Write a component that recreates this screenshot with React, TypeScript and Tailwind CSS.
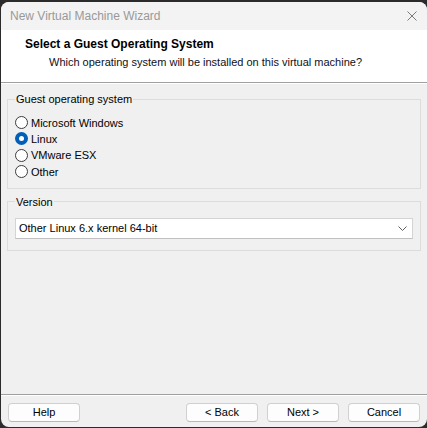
import React, { useState } from 'react';

const OS_OPTIONS = ['Microsoft Windows', 'Linux', 'VMware ESX', 'Other'];

const Radio: React.FC<{ label: string; checked: boolean; onSelect: () => void }> = ({ label, checked, onSelect }) => (
  <label className="flex h-[16.33px] cursor-default items-center" onClick={onSelect}>
    {checked ? (
      <span className="flex h-[13px] w-[13px] items-center justify-center rounded-full bg-[#005fb8]">
        <span className="h-[5px] w-[5px] rounded-full bg-white" />
      </span>
    ) : (
      <span className="h-[13px] w-[13px] rounded-full border border-[#3c3c3c] bg-white" />
    )}
    <span className="ml-[3px] text-[11px] leading-[16px] text-black">{label}</span>
  </label>
);

const WizardButton: React.FC<{ children: React.ReactNode }> = ({ children }) => (
  <button className="h-[19px] w-[72px] rounded-[4px] border border-[#d0d0d0] border-b-[#b8b8b8] bg-[#fdfdfd] text-[11px] leading-[17px] text-black">
    {children}
  </button>
);

export default function App() {
  const [os, setOs] = useState('Linux');

  return (
    <div className="h-[428px] w-[427px] overflow-hidden bg-[#2b2b2b] pl-[1px] pt-[2px] font-['Liberation_Sans',Arial,sans-serif]">
      <div className="flex h-[425px] w-[426px] flex-col overflow-hidden rounded-[8px] bg-[#f0f0f0]">
        {/* Title bar */}
        <div className="flex h-[28px] shrink-0 items-center justify-between bg-[#f3f3f3] pl-[9px] pr-[10px]">
          <span className="text-[12px] leading-[14px] text-[#999999]">New Virtual Machine Wizard</span>
          <svg width="10" height="10" viewBox="0 0 10 10" fill="none" stroke="#7a7a7a" strokeWidth="1">
            <path d="M0.5 0.5L9.5 9.5M9.5 0.5L0.5 9.5" />
          </svg>
        </div>

        {/* Header */}
        <div className="h-[52px] shrink-0 bg-white pt-[7px]">
          <h1 className="pl-[24px] text-[12px] font-bold leading-[14px] text-black">Select a Guest Operating System</h1>
          <p className="mt-[4px] pl-[48px] text-[11px] leading-[14px] text-[#101020]">
            Which operating system will be installed on this virtual machine?
          </p>
        </div>
        <div className="h-[2px] shrink-0 border-t border-[#a0a0a0] bg-white" />

        {/* Guest OS group */}
        <fieldset className="mx-[6px] mt-[8px] border border-[#dcdcdc] px-[7px] pb-[8px]">
          <legend className="px-[1px] text-[11px] leading-[14px] text-black">Guest operating system</legend>
          <div className="flex flex-col pt-[8.5px]">
            {OS_OPTIONS.map((name) => (
              <Radio key={name} label={name} checked={os === name} onSelect={() => setOs(name)} />
            ))}
          </div>
        </fieldset>

        {/* Version group */}
        <fieldset className="mx-[6px] mt-[6px] border border-[#dcdcdc] px-[7px] pb-[11px]">
          <legend className="px-[1px] text-[11px] leading-[14px] text-black">Version</legend>
          <div className="mt-[9px] flex h-[21px] items-center justify-between border border-[#d4d4d4] border-b-[#c0c0c0] bg-white pl-[3px] pr-[5px]">
            <span className="text-[11px] leading-[14px] text-black">Other Linux 6.x kernel 64-bit</span>
            <svg width="9" height="5" viewBox="0 0 9 5" fill="none" stroke="#606060" strokeWidth="1">
              <path d="M0.5 0.5L4.5 4.5L8.5 0.5" />
            </svg>
          </div>
        </fieldset>

        <div className="flex-1" />

        {/* Footer */}
        <div className="h-[2px] shrink-0 border-t border-[#a0a0a0] bg-white" />
        <div className="flex shrink-0 items-center justify-between pl-[7px] pr-[7px] pt-[7px] pb-[5px]">
          <WizardButton>Help</WizardButton>
          <div className="flex gap-[9px]">
            <WizardButton>&lt; Back</WizardButton>
            <WizardButton>Next &gt;</WizardButton>
            <WizardButton>Cancel</WizardButton>
          </div>
        </div>
      </div>
    </div>
  );
}
